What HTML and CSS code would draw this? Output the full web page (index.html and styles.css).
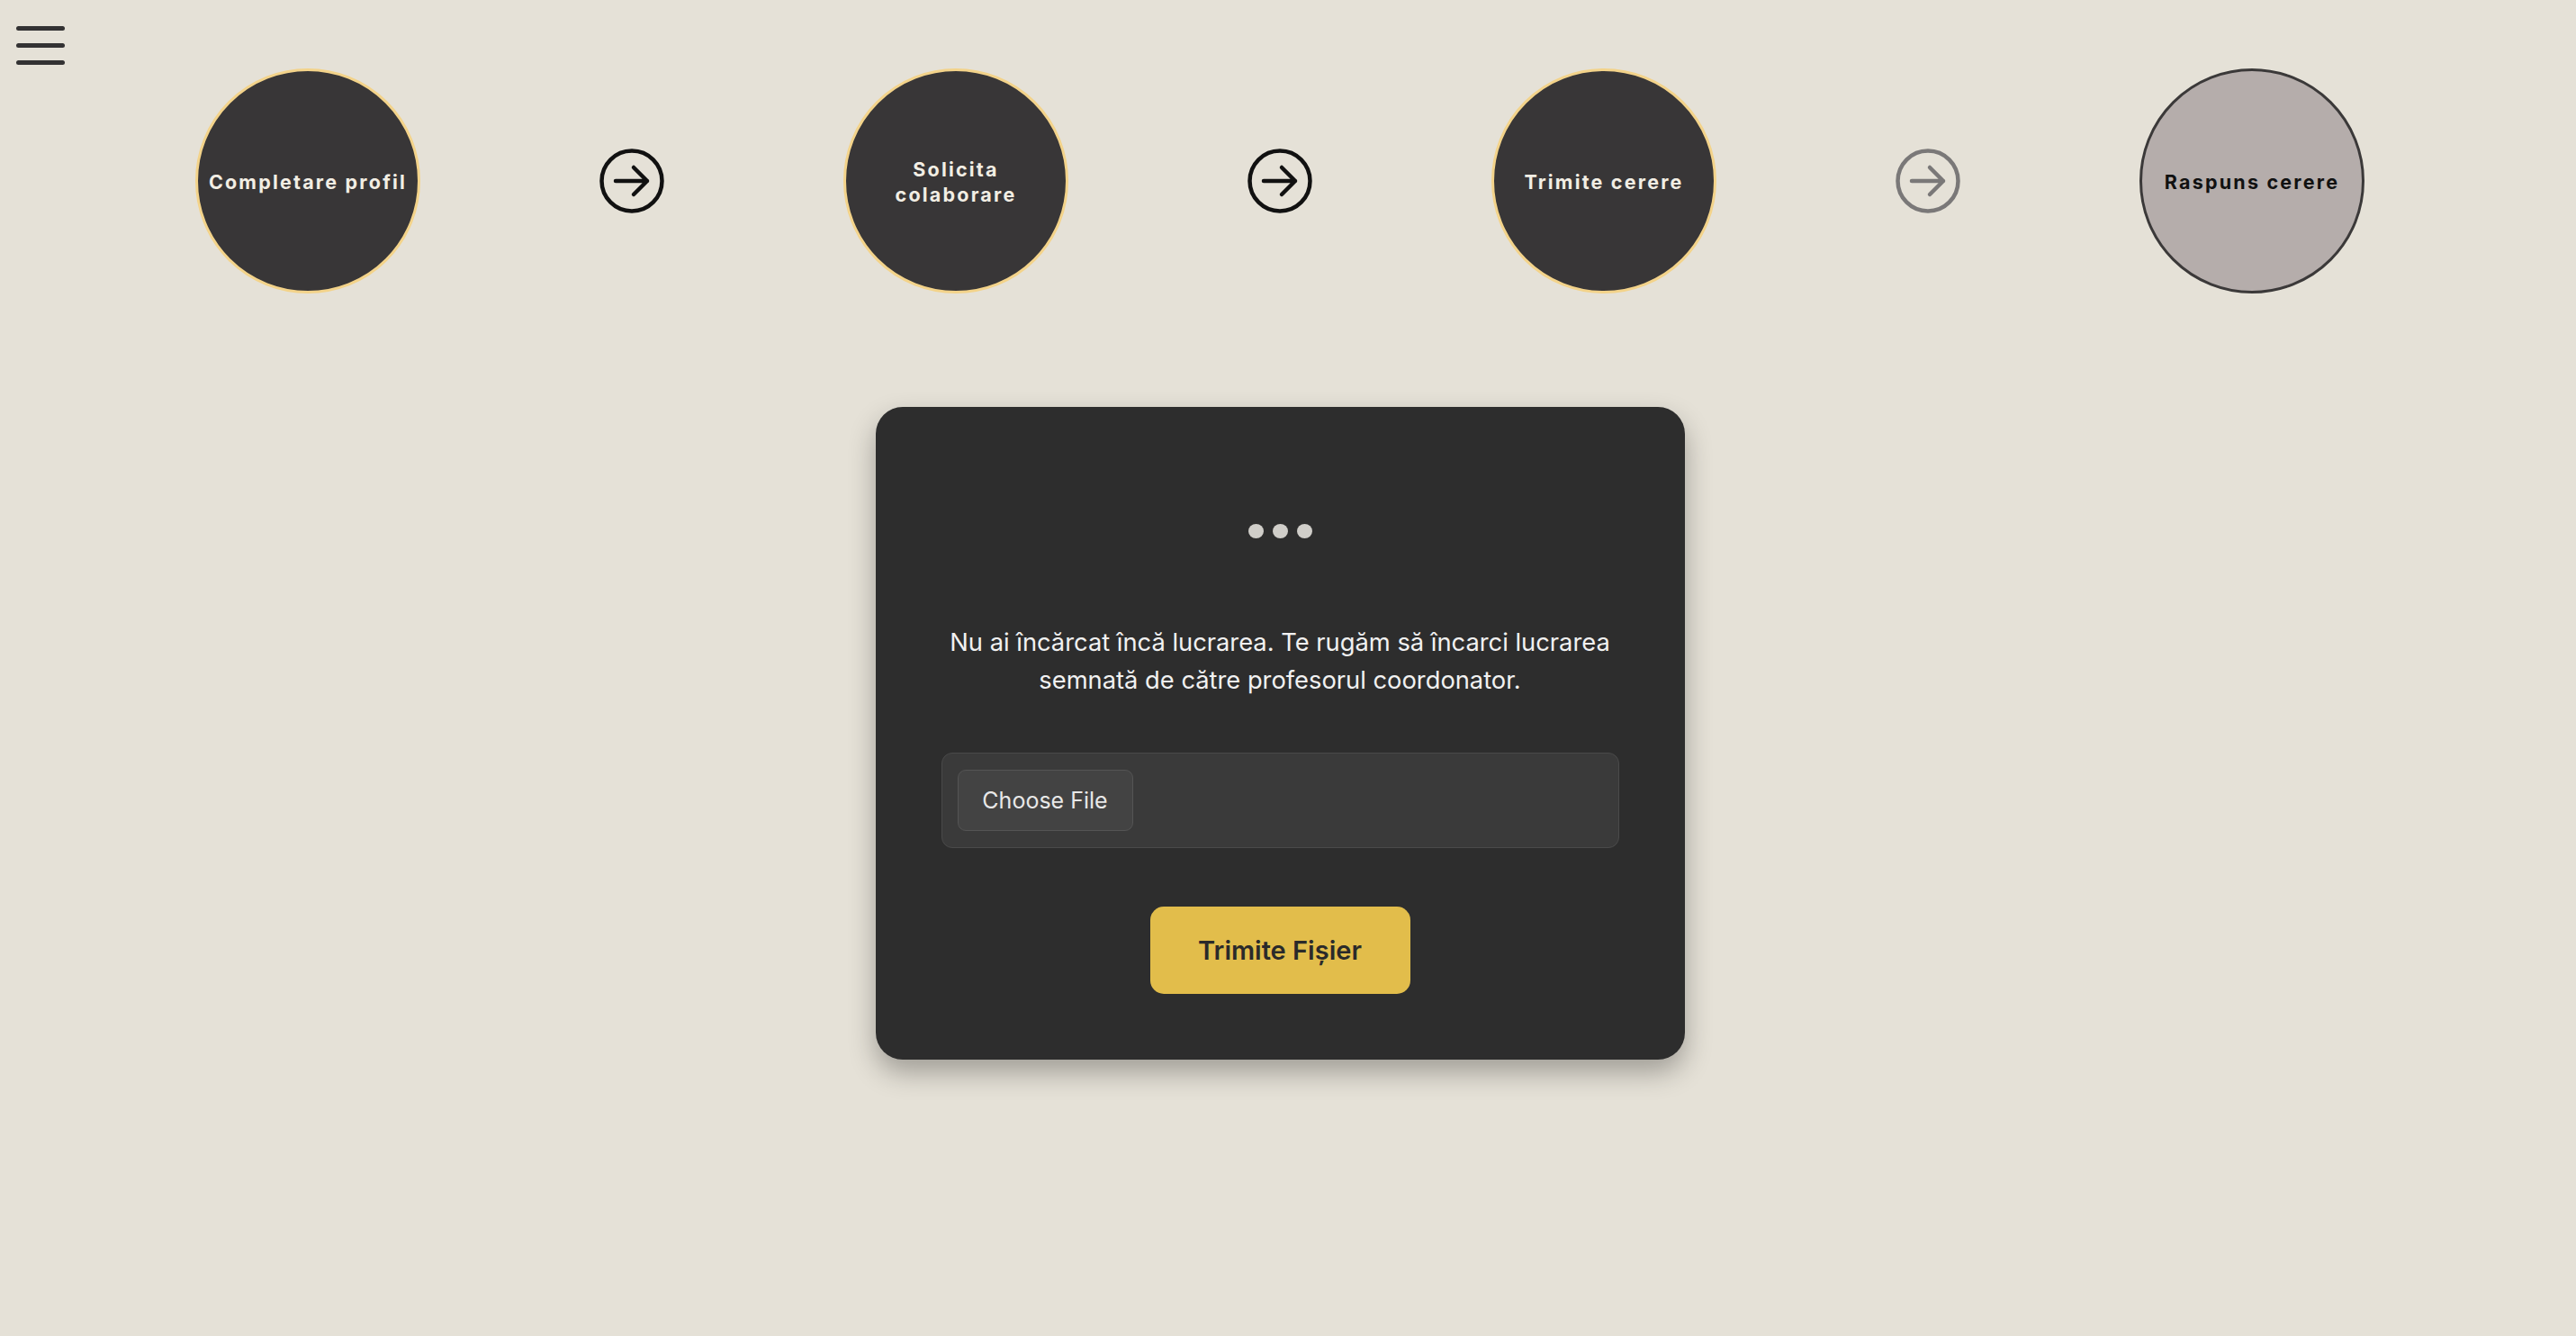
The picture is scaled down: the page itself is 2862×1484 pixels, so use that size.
FILE: index.html
```html
<!DOCTYPE html>
<html lang="ro">
<head>
<meta charset="utf-8">
<title>Încărcare lucrare</title>
<link rel="stylesheet" href="styles.css">
</head>
<body>
<button class="menu-btn" aria-label="Meniu"><span></span><span></span><span></span></button>
<main class="page">
  <nav class="stepper">
    <div class="cell"><div class="step done">Completare profil</div></div>
    <div class="cell">
      <svg class="arrow" viewBox="0 0 72 72"><circle cx="36" cy="36" r="33.5"/><path d="M18 36 H53 M38 21 L53 36 L38 51"/></svg>
    </div>
    <div class="cell"><div class="step done">Solicita<br>colaborare</div></div>
    <div class="cell">
      <svg class="arrow" viewBox="0 0 72 72"><circle cx="36" cy="36" r="33.5"/><path d="M18 36 H53 M38 21 L53 36 L38 51"/></svg>
    </div>
    <div class="cell"><div class="step done">Trimite cerere</div></div>
    <div class="cell">
      <svg class="arrow muted" viewBox="0 0 72 72"><circle cx="36" cy="36" r="33.5"/><path d="M18 36 H53 M38 21 L53 36 L38 51"/></svg>
    </div>
    <div class="cell"><div class="step pending">Raspuns cerere</div></div>
  </nav>

  <section class="card">
    <div class="loader"><span></span><span></span><span></span></div>
    <p class="message">Nu ai încărcat încă lucrarea. Te rugăm să încarci lucrarea semnată de către profesorul coordonator.</p>
    <div class="file-field"><span class="file-btn">Choose File</span></div>
    <button class="submit">Trimite Fișier</button>
  </section>
</main>
</body>
</html>
```
FILE: styles.css
```css
* { box-sizing: border-box; }

html, body {
  margin: 0;
  padding: 0;
}

body {
  background: #e5e1d7;
  font-family: Inter, "Noto Sans", "Liberation Sans", sans-serif;
  width: 2862px;
  min-height: 1484px;
}

.menu-btn {
  position: absolute;
  left: 18px;
  top: 29px;
  display: flex;
  flex-direction: column;
  gap: 14px;
  padding: 0;
  border: 0;
  background: none;
}

.menu-btn span {
  display: block;
  width: 54px;
  height: 5px;
  border-radius: 3px;
  background: #333233;
}

.page {
  width: 2844px;
  display: flex;
  flex-direction: column;
  align-items: center;
  padding-top: 76px;
}

.stepper {
  display: grid;
  grid-template-columns: repeat(7, 360px);
  align-items: center;
  justify-items: center;
}

.cell {
  display: flex;
  align-items: center;
  justify-content: center;
}

.step {
  width: 250px;
  height: 250px;
  border-radius: 50%;
  display: flex;
  align-items: center;
  justify-content: center;
  text-align: center;
  font-size: 21.5px;
  font-weight: 700;
  letter-spacing: 2.2px;
  line-height: 28px;
  padding-top: 2px;
}

.step.done {
  background: #383637;
  border: 3px solid #f3d38a;
  color: #f2eee4;
}

.step.pending {
  background: #b5adab;
  border: 3.5px solid #3b3939;
  color: #111;
}

.arrow {
  width: 72px;
  height: 72px;
  fill: none;
  stroke: #111;
  stroke-width: 4.5;
  stroke-linecap: round;
  stroke-linejoin: round;
}

.arrow.muted { stroke: #7a7878; }

.card {
  margin-top: 126px;
  width: 899px;
  background: #2d2d2d;
  border-radius: 30px;
  padding: 74px 73px 73px;
  display: flex;
  flex-direction: column;
  align-items: center;
  box-shadow: 0 14px 30px rgba(0, 0, 0, 0.3);
}

.loader {
  height: 128px;
  display: flex;
  align-items: center;
  gap: 10px;
}

.loader span {
  width: 17px;
  height: 16px;
  border-radius: 50%;
  background: #d0cec9;
}

.message {
  margin: 39px 0 0;
  color: #f1f1f1;
  font-size: 27.3px;
  line-height: 42px;
  text-align: center;
}

.file-field {
  margin-top: 59px;
  width: 100%;
  height: 106px;
  background: #3a3a3a;
  border: 1.5px solid #4a4a4a;
  border-radius: 12px;
  display: flex;
  align-items: center;
  padding: 0 17px;
}

.file-btn {
  width: 195px;
  height: 68px;
  display: flex;
  align-items: center;
  justify-content: center;
  background: #434343;
  border: 1.5px solid #545454;
  border-radius: 9px;
  color: #e8e8e8;
  font-size: 25px;
}

.submit {
  margin-top: 65px;
  width: 289px;
  height: 97px;
  border: 0;
  border-radius: 15px;
  background: #e2bd4b;
  color: #2a2a2a;
  font-family: inherit;
  font-size: 29px;
  font-weight: 600;
}
```
